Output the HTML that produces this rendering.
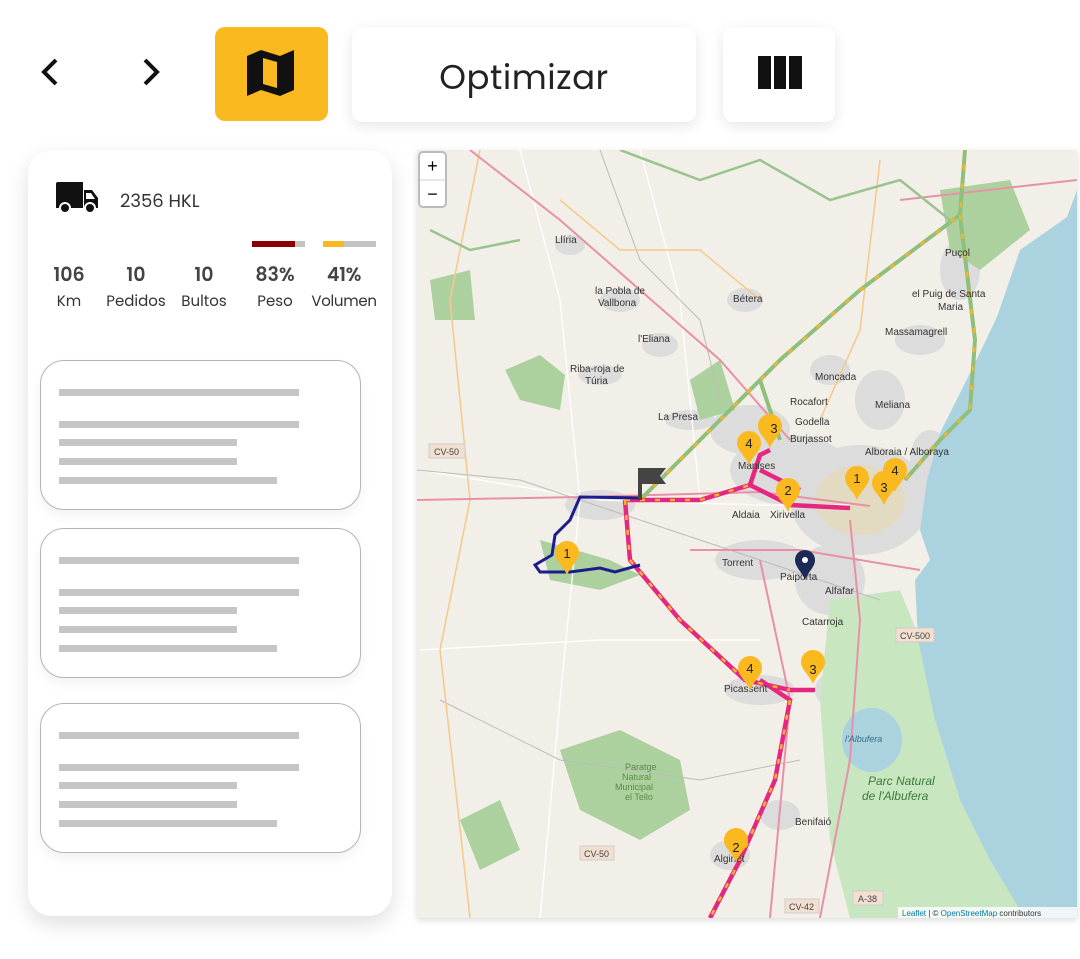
<!DOCTYPE html>
<html><head><meta charset="utf-8">
<style>
*{margin:0;padding:0;box-sizing:border-box}
body{width:1080px;height:959px;background:#fff;position:relative;overflow:hidden;font-family:"Poppins","Liberation Sans",sans-serif;color:#222}
.btn{position:absolute;border-radius:10px;background:#fff;box-shadow:0 4px 14px rgba(0,0,0,.10)}
.panel{position:absolute;left:28px;top:150px;width:364px;height:766px;background:#fff;border-radius:24px;box-shadow:0 8px 22px rgba(0,0,0,.13)}
.card{position:absolute;left:12px;width:321px;height:150px;border:1px solid #b5b5b5;border-radius:24px;background:#fff;box-shadow:0 6px 12px rgba(0,0,0,.05)}
.card i{position:absolute;left:18px;height:7px;background:#c6c6c6;display:block}
.stat{position:absolute;top:110px;text-align:center;font-size:15px;color:#333}
.stat b{display:block;font-size:19px;font-weight:600;color:#444;margin-bottom:1px}
</style></head><body>
<svg style="position:absolute;left:38px;top:55px" width="24" height="34" viewBox="0 0 24 34"><path d="M18 5 L6 17 L18 29" fill="none" stroke="#111" stroke-width="4"/></svg>
<svg style="position:absolute;left:139px;top:55px" width="24" height="34" viewBox="0 0 24 34"><path d="M6 5 L18 17 L6 29" fill="none" stroke="#111" stroke-width="4"/></svg>
<div class="btn" style="left:215px;top:27px;width:113px;height:94px;background:#fbb920;box-shadow:none"></div>
<svg style="position:absolute;left:246px;top:50px" width="50" height="48" viewBox="0 0 50 48"><path d="M1 6 L15 0 L34 6 L48 0 L48 40 L34 46 L15 40 L1 46 Z" fill="#111"/><path d="M17 8 L31 12 L31 38 L17 34 Z" fill="#fbb920"/></svg>
<div class="btn" style="left:352px;top:27px;width:344px;height:95px;text-align:center;line-height:100px;font-size:34px;color:#222;letter-spacing:.5px">Optimizar</div>
<div class="btn" style="left:723px;top:27px;width:112px;height:95px"></div>
<div style="position:absolute;left:758px;top:56px;width:44px;height:33px;background:#111"></div>
<div style="position:absolute;left:771px;top:56px;width:3px;height:33px;background:#fff"></div>
<div style="position:absolute;left:786px;top:56px;width:3px;height:33px;background:#fff"></div>

<div class="panel">
 <svg style="position:absolute;left:27px;top:32px" width="44" height="32" viewBox="0 0 44 32"><path d="M1 2 Q1 0 3 0 L28 0 L28 26 L1 26 Z" fill="#111"/><path d="M29 8 L37 8 L43 16 L43 26 L29 26 Z" fill="#111"/><path d="M31 11 L36 11 L40 17 L31 17 Z" fill="#fff"/><circle cx="10" cy="26" r="5" fill="#111" stroke="#fff" stroke-width="2"/><circle cx="35" cy="26" r="5" fill="#111" stroke="#fff" stroke-width="2"/></svg>
 <div style="position:absolute;left:92px;top:38px;font-size:18px;color:#333">2356 HKL</div>
 <div style="position:absolute;left:224px;top:91px;width:53px;height:6px;background:#c4c4c4"><div style="width:43px;height:6px;background:#8b0000"></div></div>
 <div style="position:absolute;left:295px;top:91px;width:53px;height:6px;background:#c4c4c4"><div style="width:21px;height:6px;background:#fbb920"></div></div>
 <div class="stat" style="left:20px;width:42px"><b>106</b>Km</div>
 <div class="stat" style="left:74px;width:68px"><b>10</b>Pedidos</div>
 <div class="stat" style="left:148px;width:56px"><b>10</b>Bultos</div>
 <div class="stat" style="left:222px;width:50px"><b>83%</b>Peso</div>
 <div class="stat" style="left:276px;width:80px;letter-spacing:-.3px"><b>41%</b>Volumen</div>
 <div class="card" style="top:210px"><i style="top:28px;width:240px"></i><i style="top:60px;width:240px"></i><i style="top:78px;width:178px"></i><i style="top:97px;width:178px"></i><i style="top:116px;width:218px"></i></div>
 <div class="card" style="top:378px"><i style="top:28px;width:240px"></i><i style="top:60px;width:240px"></i><i style="top:78px;width:178px"></i><i style="top:97px;width:178px"></i><i style="top:116px;width:218px"></i></div>
 <div class="card" style="top:553px"><i style="top:28px;width:240px"></i><i style="top:60px;width:240px"></i><i style="top:78px;width:178px"></i><i style="top:97px;width:178px"></i><i style="top:116px;width:218px"></i></div>
</div>

<svg style="position:absolute;left:417px;top:150px;box-shadow:0 2px 6px rgba(0,0,0,.15)" width="660" height="768" viewBox="417 150 660 768" font-family="Liberation Sans,sans-serif">
 <rect x="417" y="150" width="660" height="768" fill="#f2efe9"/>
 <g fill="#dcdcdc">
  <ellipse cx="860" cy="500" rx="70" ry="55"/><ellipse cx="790" cy="470" rx="60" ry="35"/><ellipse cx="750" cy="430" rx="40" ry="25"/>
  <ellipse cx="760" cy="560" rx="45" ry="20"/><ellipse cx="830" cy="580" rx="35" ry="35"/><ellipse cx="600" cy="505" rx="35" ry="15"/>
  <ellipse cx="760" cy="690" rx="35" ry="15"/><ellipse cx="840" cy="690" rx="25" ry="20"/><ellipse cx="780" cy="815" rx="20" ry="15"/>
  <ellipse cx="730" cy="855" rx="20" ry="15"/><ellipse cx="930" cy="460" rx="20" ry="30"/><ellipse cx="960" cy="270" rx="20" ry="30"/>
  <ellipse cx="880" cy="400" rx="25" ry="30"/><ellipse cx="830" cy="370" rx="20" ry="15"/><ellipse cx="920" cy="340" rx="25" ry="15"/>
  <ellipse cx="620" cy="300" rx="20" ry="12"/><ellipse cx="660" cy="345" rx="18" ry="12"/><ellipse cx="570" cy="245" rx="15" ry="10"/>
  <ellipse cx="745" cy="300" rx="18" ry="12"/><ellipse cx="600" cy="375" rx="22" ry="10"/><ellipse cx="690" cy="420" rx="25" ry="10"/>
 </g>
 <ellipse cx="860" cy="500" rx="45" ry="35" fill="#e8d9b0" opacity=".6"/>
 <g fill="#add19e">
  <path d="M505 370 L540 355 L565 375 L560 410 L520 400 Z"/><path d="M540 540 L610 560 L640 575 L600 590 L550 580 Z"/>
  <path d="M560 750 L620 730 L680 760 L690 810 L640 840 L580 810 Z"/><path d="M430 280 L470 270 L475 320 L435 320 Z"/>
  <path d="M460 820 L500 800 L520 850 L480 870 Z"/><path d="M690 380 L720 360 L735 410 L700 420 Z"/>
  <path d="M940 190 L1010 180 L1030 230 L980 270 L950 250 Z"/>
 </g>
 <path d="M830 600 L900 590 L920 640 L935 720 L960 800 L1000 870 L1025 918 L850 918 L830 840 L820 700 Z" fill="#c8e6c0"/>
 <path d="M1077 150 L1077 918 L1025 918 L990 860 L960 800 L935 720 L918 640 L915 580 L930 560 L920 530 L927 480 L940 433 L973 367 L997 317 L1020 250 L1067 217 L1077 190 Z" fill="#aad3df"/>
 <ellipse cx="872" cy="740" rx="30" ry="32" fill="#aad3df"/>
 <g fill="none" stroke="#fff" stroke-width="1.5" opacity=".9">
  <path d="M420 470 L600 500 L760 505 L850 505"/><path d="M520 150 L560 300 L580 500 L560 700 L540 918"/>
  <path d="M640 150 L680 300 L700 500"/><path d="M420 650 L600 640 L760 640"/>
 </g>
 <g fill="none" stroke="#bbb" stroke-width="1">
  <path d="M417 470 L520 480 L640 520 L760 560 L880 600"/><path d="M600 150 L640 260 L700 320 L720 400"/><path d="M440 700 L560 760 L700 780 L800 760"/>
 </g>
 <g fill="none" stroke="#f5c98a" stroke-width="1.5">
  <path d="M480 150 L450 300 L470 500 L440 650 L470 918"/><path d="M560 200 L620 250 L700 250 L760 300"/>
  <path d="M880 160 L860 330 L820 420"/>
 </g>
 <g fill="none" stroke="#e891a6" stroke-width="2">
  <path d="M417 500 L580 497 L760 492 L870 506"/><path d="M470 150 L560 220 L640 290 L720 360 L790 440"/>
  <path d="M690 550 L800 550 L920 570"/><path d="M900 200 L1077 180"/><path d="M760 560 L790 700 L770 918"/>
  <path d="M850 520 L860 620 L850 760 L820 918"/>
 </g>
 <g fill="none" stroke="#9bc38f" stroke-width="2.5">
  <path d="M620 150 L700 180 L760 160 L830 200 L900 180 L950 220"/><path d="M430 230 L470 250 L520 240"/>
 </g>
 <path d="M640 500 L700 440 L780 360 L860 290 L960 215 L965 150" fill="none" stroke="#8fbf7a" stroke-width="4"/>
 <path d="M960 215 L975 340 L970 410 L940 440 L905 480" fill="none" stroke="#8fbf7a" stroke-width="4"/>
 <path d="M760 380 L780 440" fill="none" stroke="#8fbf7a" stroke-width="4"/>
 <path d="M640 500 L700 440 L780 360 L860 290 L960 215 L965 150 M960 215 L975 340 L970 410 L940 440 L905 480" fill="none" stroke="#f8b32b" stroke-width="2.5" stroke-dasharray="5 14"/>
 <path d="M625 500 L630 560 L680 620 L745 680 L790 690 L815 690 M760 680 L790 700 L775 780 L740 860 L710 918 M625 500 L700 500 L750 485 L760 455 L770 450 M750 485 L790 505 L850 508 M760 470 L800 490" fill="none" stroke="#e6277f" stroke-width="4.5"/>
 <path d="M625 500 L630 560 L680 620 L745 680 L790 690 M790 700 L775 780 L740 860 L710 918 M625 500 L700 500 L750 485" fill="none" stroke="#f8b32b" stroke-width="2.5" stroke-dasharray="5 10"/>
 <path d="M640 498 L580 497 L570 520 L555 535 L552 555 L535 565 L540 572 L570 572 L600 568 L615 572 L640 565" fill="none" stroke="#1c1c8c" stroke-width="3"/>
 <g font-size="10" fill="#333">
  <text x="555" y="243">Llíria</text><text x="595" y="294">la Pobla de</text><text x="598" y="306">Vallbona</text>
  <text x="733" y="302">Bétera</text><text x="638" y="342">l'Eliana</text><text x="570" y="372">Riba-roja de</text><text x="585" y="384">Túria</text>
  <text x="658" y="420">La Presa</text><text x="815" y="380">Moncada</text><text x="790" y="405">Rocafort</text><text x="795" y="425">Godella</text>
  <text x="790" y="442">Burjassot</text><text x="875" y="408">Meliana</text><text x="865" y="455">Alboraia / Alboraya</text>
  <text x="912" y="297">el Puig de Santa</text><text x="938" y="310">Maria</text><text x="885" y="335">Massamagrell</text><text x="945" y="256">Puçol</text>
  <text x="732" y="518">Aldaia</text><text x="770" y="518">Xirivella</text><text x="722" y="566">Torrent</text><text x="780" y="580">Paiporta</text>
  <text x="825" y="594">Alfafar</text><text x="802" y="625">Catarroja</text><text x="724" y="692">Picassent</text><text x="795" y="825">Benifaió</text>
  <text x="714" y="862">Alginet</text><text x="738" y="469">Manises</text>
  <text x="625" y="770" fill="#5a8a4a" font-size="9">Paratge</text><text x="622" y="780" fill="#5a8a4a" font-size="9">Natural</text>
  <text x="615" y="790" fill="#5a8a4a" font-size="9">Municipal</text><text x="625" y="800" fill="#5a8a4a" font-size="9">el Tello</text>
  <text x="868" y="785" fill="#3c7a3c" font-size="12" font-style="italic">Parc Natural</text><text x="862" y="800" fill="#3c7a3c" font-size="12" font-style="italic">de l'Albufera</text>
  <text x="845" y="742" fill="#3a6a8a" font-size="9" font-style="italic">l'Albufera</text>
 </g>
 <g font-size="9" fill="#444"><rect x="429" y="444" width="36" height="14" fill="#f2dfd0" stroke="#ccc"/><text x="434" y="455">CV-50</text>
  <rect x="896" y="628" width="38" height="14" fill="#f2dfd0" stroke="#ccc"/><text x="900" y="639">CV-500</text>
  <rect x="580" y="846" width="34" height="14" fill="#f2dfd0" stroke="#ccc"/><text x="584" y="857">CV-50</text>
  <rect x="785" y="899" width="34" height="14" fill="#f2dfd0" stroke="#ccc"/><text x="789" y="910">CV-42</text>
  <rect x="853" y="891" width="30" height="14" fill="#f2dfd0" stroke="#ccc"/><text x="858" y="902">A-38</text></g>
 <g font-size="13" fill="#222" text-anchor="middle">
  <g transform="translate(567,575)"><path d="M0 0 C-4 -10 -12 -14 -12 -22 A12 12 0 1 1 12 -22 C12 -14 4 -10 0 0Z" fill="#fbb920"/><text y="-17">1</text></g>
  <g transform="translate(749,465)"><path d="M0 0 C-4 -10 -12 -14 -12 -22 A12 12 0 1 1 12 -22 C12 -14 4 -10 0 0Z" fill="#fbb920"/><text y="-17">4</text></g>
  <g transform="translate(770,448)"><path d="M0 0 C-4 -10 -12 -14 -12 -22 A12 12 0 1 1 12 -22 C12 -14 4 -10 0 0Z" fill="#fbb920"/><text x="4" y="-15">3</text></g>
  <g transform="translate(788,512)"><path d="M0 0 C-4 -10 -12 -14 -12 -22 A12 12 0 1 1 12 -22 C12 -14 4 -10 0 0Z" fill="#fbb920"/><text y="-17">2</text></g>
  <g transform="translate(857,500)"><path d="M0 0 C-4 -10 -12 -14 -12 -22 A12 12 0 1 1 12 -22 C12 -14 4 -10 0 0Z" fill="#fbb920"/><text y="-17">1</text></g>
  <g transform="translate(895,492)"><path d="M0 0 C-4 -10 -12 -14 -12 -22 A12 12 0 1 1 12 -22 C12 -14 4 -10 0 0Z" fill="#fbb920"/><text y="-17">4</text></g>
  <g transform="translate(884,505)"><path d="M0 0 C-4 -10 -12 -14 -12 -22 A12 12 0 1 1 12 -22 C12 -14 4 -10 0 0Z" fill="#fbb920"/><text y="-13">3</text></g>
  <g transform="translate(750,690)"><path d="M0 0 C-4 -10 -12 -14 -12 -22 A12 12 0 1 1 12 -22 C12 -14 4 -10 0 0Z" fill="#fbb920"/><text y="-17">4</text></g>
  <g transform="translate(813,684)"><path d="M0 0 C-4 -10 -12 -14 -12 -22 A12 12 0 1 1 12 -22 C12 -14 4 -10 0 0Z" fill="#fbb920"/><text y="-10">3</text></g>
  <g transform="translate(736,862)"><path d="M0 0 C-4 -10 -12 -14 -12 -22 A12 12 0 1 1 12 -22 C12 -14 4 -10 0 0Z" fill="#fbb920"/><text y="-10">2</text></g>
 </g>
 <g transform="translate(805,580)"><path d="M0 0 C-3 -8 -10 -13 -10 -20 A10 10 0 1 1 10 -20 C10 -13 3 -8 0 0Z" fill="#1c2b55"/><circle cy="-20" r="3" fill="#fff"/></g>
 <g fill="#444"><rect x="638" y="468" width="4" height="32"/><path d="M642 468 L666 468 L660 476 L666 484 L642 484Z"/></g>
 <rect x="419" y="152" width="27" height="55" rx="4" fill="#fff" stroke="#bbb" stroke-width="2"/>
 <line x1="420" y1="180" x2="445" y2="180" stroke="#ccc"/>
 <text x="432.5" y="172" font-size="18" text-anchor="middle" fill="#000">+</text>
 <text x="432.5" y="200" font-size="18" text-anchor="middle" fill="#000">−</text>
 <rect x="898" y="907" width="179" height="11" fill="#fff" opacity=".8"/>
 <text x="902" y="916" font-size="8" fill="#333"><tspan fill="#0078a8">Leaflet</tspan> | © <tspan fill="#0078a8">OpenStreetMap</tspan> contributors</text>
</svg>
</body></html>
